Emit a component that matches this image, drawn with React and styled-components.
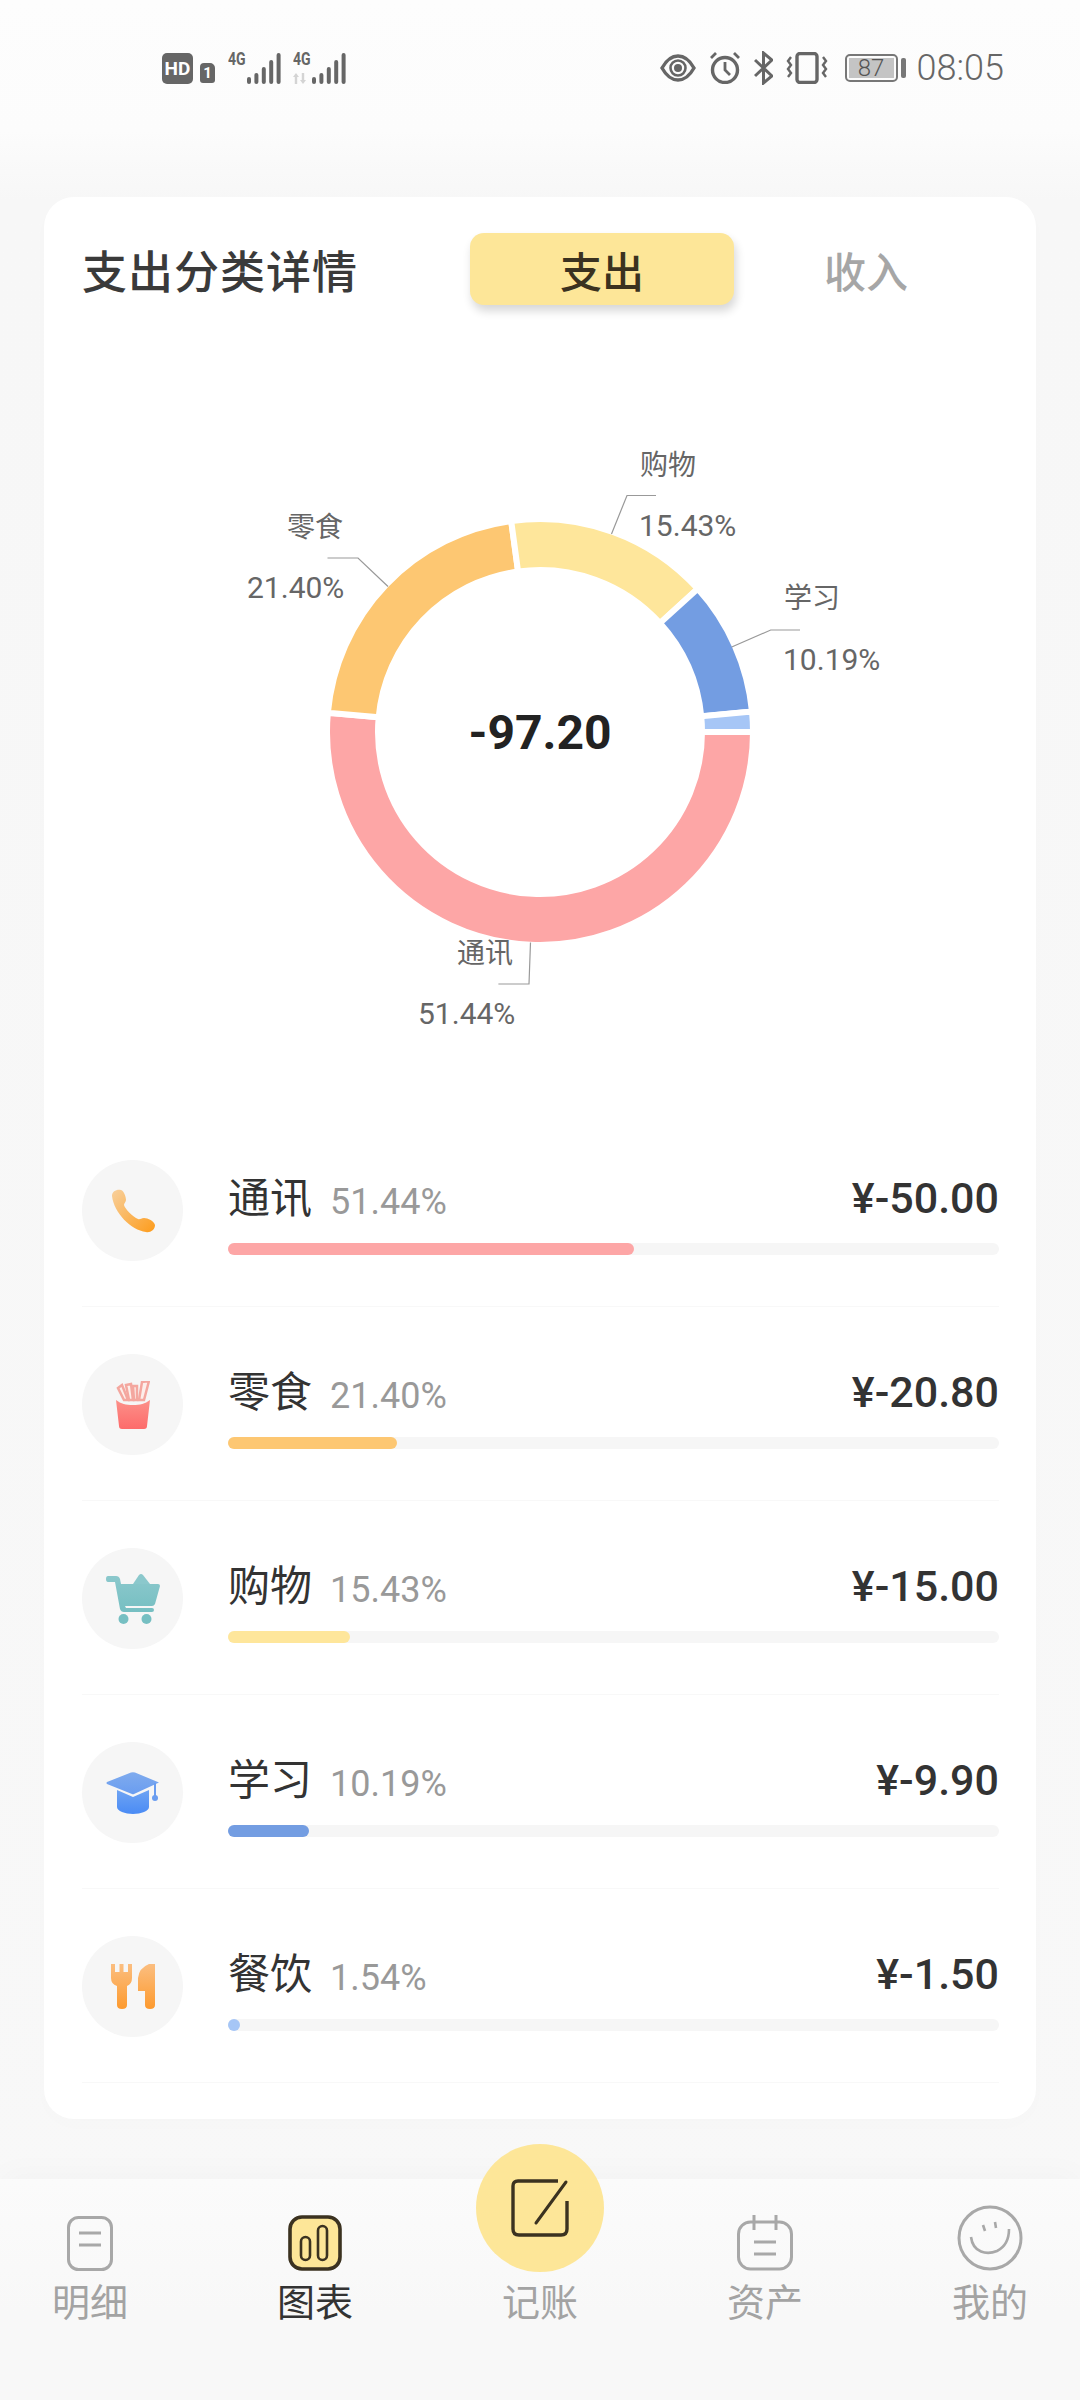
import React from 'react';
import styled, { createGlobalStyle } from 'styled-components';

const GlobalStyle = createGlobalStyle`
	html, body {
		margin: 0;
		padding: 0;
		background: #f8f8f8;
	}
	* {
		box-sizing: border-box;
	}
`;

const CJK = `Roboto, 'Noto Sans CJK SC', sans-serif`;

const Page = styled.div`
	width: 1080px;
	height: 2400px;
	overflow: hidden;
	font-family: ${CJK};
	background: linear-gradient(#fdfdfd 0, #fcfcfc 130px, #f7f7f7 200px, #f8f8f8 100%);
`;

/* status bar */
const StatusBar = styled.div`
	height: 136px;
	padding: 0 76px 0 162px;
	display: flex;
	align-items: center;
	justify-content: space-between;
	color: #666;
`;

const StatusGroup = styled.div`
	display: flex;
	align-items: center;
`;

const HdBadge = styled.span`
	width: 31px;
	height: 31px;
	border-radius: 5px;
	background: #666;
	color: #fff;
	font: 700 19px 'Roboto', sans-serif;
	display: flex;
	align-items: center;
	justify-content: center;
`;

const SimBadge = styled.span`
	width: 15px;
	height: 20px;
	margin: 9px 13px 0 7px;
	border-radius: 4px 5px 3px 3px;
	background: #666;
	color: #fff;
	font: 700 15px 'Roboto', sans-serif;
	display: flex;
	align-items: center;
	justify-content: center;
`;

const Signal = styled.div`
	display: flex;
	height: 32px;
	margin-right: ${(p) => p.$gap || 0}px;
`;

const SignalLabel = styled.div`
	width: 19px;
	display: flex;
	flex-direction: column;
	justify-content: space-between;
	font: 700 18px/14px 'Roboto', sans-serif;
	span {
		display: block;
		transform: scaleX(0.78);
		transform-origin: left top;
		white-space: nowrap;
	}
`;

const StatusIcon = styled.svg`
	display: block;
	margin-right: ${(p) => p.$gap || 0}px;
	flex: none;
`;

const Battery = styled.div`
	width: 53px;
	height: 28px;
	padding: 2px;
	border: 2px solid #777;
	border-radius: 5px;
	margin-right: 3px;
`;

const BatteryFill = styled.div`
	height: 100%;
	background: #c4c4c4;
	color: #555;
	font: 300 24px/20px 'Roboto', sans-serif;
	text-align: center;
`;

const BatteryNub = styled.div`
	width: 5px;
	height: 20px;
	background: #777;
	border-radius: 2px;
	margin-right: 11px;
`;

const Clock = styled.span`
	font: 300 36px 'Roboto', sans-serif;
	color: #666;
`;

/* card */
const Card = styled.div`
	width: 992px;
	margin: 61px 44px 0;
	padding: 36px 0;
	background: #fff;
	border-radius: 30px;
	box-shadow: 0 6px 20px rgba(0, 0, 0, 0.012);
`;

const CardHead = styled.div`
	display: flex;
	align-items: center;
	padding-left: 38px;
`;

const CardTitle = styled.h1`
	width: 388px;
	margin: 0;
	font-size: 45px;
	font-weight: 500;
	color: #3a3a3a;
	letter-spacing: 1px;
`;

const Tab = styled.div`
	width: 264px;
	height: 72px;
	border-radius: 14px;
	display: flex;
	align-items: center;
	justify-content: center;
	font-size: 42px;
	font-weight: 500;
	color: ${(p) => (p.$active ? '#3b3220' : '#a6a6a6')};
	background: ${(p) => (p.$active ? '#fde698' : 'transparent')};
	box-shadow: ${(p) => (p.$active ? '2px 6px 10px rgba(0, 0, 0, 0.16)' : 'none')};
`;

const Chart = styled.svg`
	display: block;
	width: 992px;
	height: 808px;
`;

const ChartLabel = styled.text`
	font-family: ${CJK};
	font-size: ${(p) => p.$size}px;
	fill: #666;
	dominant-baseline: central;
`;

const ChartTotal = styled.text`
	font-family: Roboto, sans-serif;
	font-size: 48px;
	font-weight: 700;
	fill: #222;
	text-anchor: middle;
	dominant-baseline: central;
`;

const List = styled.div`
	padding: 0 37px 0 38px;
`;

const Row = styled.div`
	height: 194px;
	display: flex;
	align-items: center;
	border-bottom: 1px solid #f8f8f8;
`;

const IconCircle = styled.div`
	width: 101px;
	height: 101px;
	border-radius: 50%;
	background: #f6f6f6;
	display: flex;
	align-items: center;
	justify-content: center;
	flex: none;
	margin: 2px 45px 0 0;
`;

const RowBody = styled.div`
	flex: 1;
	padding-top: 2px;
`;

const RowTop = styled.div`
	height: 56px;
	display: flex;
	align-items: center;
	margin-bottom: 20px;
`;

const RowName = styled.span`
	font-size: 42px;
	color: #333;
	margin-right: 18px;
`;

const RowPercent = styled.span`
	font-size: 36px;
	color: #999;
	margin-top: 14px;
`;

const RowAmount = styled.span`
	margin-left: auto;
	margin-top: 6px;
	font-size: 43px;
	font-weight: 500;
	color: #333;
`;

const Track = styled.div`
	height: 12px;
	border-radius: 6px;
	background: #f6f6f6;
`;

const Fill = styled.div`
	height: 100%;
	min-width: 12px;
	border-radius: 6px;
	background: ${(p) => p.$color};
`;

/* bottom nav */
const Nav = styled.div`
	position: relative;
	height: 221px;
	margin-top: 60px;
	padding: 20px 46px 0;
	display: flex;
	justify-content: space-between;
	background: linear-gradient(#fbfbfb, #f8f8f8 60%);
	box-shadow: 0 -6px 30px rgba(0, 0, 0, 0.025);
`;

const NavItem = styled.div`
	width: 88px;
	display: flex;
	flex-direction: column;
	align-items: center;
	font-size: 38px;
	line-height: 50px;
	color: ${(p) => (p.$active ? '#333' : '#a3a3a3')};
`;

const NavIcon = styled.div`
	height: 72px;
	display: flex;
	align-items: flex-end;
	margin-bottom: 7px;
`;

const Fab = styled.div`
	position: absolute;
	left: 476px;
	top: -35px;
	width: 128px;
	height: 128px;
	border-radius: 50%;
	background: #fde698;
	display: flex;
	align-items: center;
	justify-content: center;
`;

const SEGMENTS = [
	{ pct: 51.44, color: '#fda6a6' },
	{ pct: 21.4, color: '#fdc772' },
	{ pct: 15.43, color: '#fee69b' },
	{ pct: 10.19, color: '#739de2' },
	{ pct: 1.54, color: '#a6c6f6' },
];

const CX = 496;
const CY = 427;

function arc(startPct, endPct) {
	const r1 = 213;
	const r0 = 162;
	const a = (startPct / 100) * Math.PI * 2;
	const b = (endPct / 100) * Math.PI * 2;
	const large = endPct - startPct > 50 ? 1 : 0;
	const pt = (r, t) => `${CX + r * Math.cos(t)} ${CY + r * Math.sin(t)}`;
	return `M${pt(r1, a)} A${r1} ${r1} 0 ${large} 1 ${pt(r1, b)} L${pt(r0, b)} A${r0} ${r0} 0 ${large} 0 ${pt(r0, a)}Z`;
}

// card coordinates, the chart starts 44px in and 305px down
const LABELS = [
	{ name: '购物', value: '15.43%', x: 595, y1: 160, y2: 220, line: '567.5,229 583,190.5 612,190.5' },
	{ name: '零食', value: '21.40%', x: 203, y1: 222, y2: 282, nameX: 243, line: '344,281.5 314,253 283.5,253' },
	{ name: '学习', value: '10.19%', x: 739, y1: 293, y2: 354, line: '687.7,342 726.7,325 756,325' },
	{ name: '通讯', value: '51.44%', x: 374, y1: 648, y2: 708, nameX: 413, line: '486.5,637.5 485,679 454.4,679' },
];

const ROWS = [
	{ name: '通讯', pct: 51.44, text: '51.44%', amount: '¥-50.00', color: '#fda6a6', icon: 'phone' },
	{ name: '零食', pct: 21.4, text: '21.40%', amount: '¥-20.80', color: '#fdc772', icon: 'fries' },
	{ name: '购物', pct: 15.43, text: '15.43%', amount: '¥-15.00', color: '#fee69b', icon: 'cart' },
	{ name: '学习', pct: 10.19, text: '10.19%', amount: '¥-9.90', color: '#739de2', icon: 'hat' },
	{ name: '餐饮', pct: 1.54, text: '1.54%', amount: '¥-1.50', color: '#a6c6f6', icon: 'food' },
];

function Grad({ id, from, to, diagonal }) {
	return (
		<defs>
			<linearGradient id={id} x1="0" y1="0" x2={diagonal ? '1' : '0'} y2="1">
				<stop offset="0" stopColor={from} />
				<stop offset="1" stopColor={to} />
			</linearGradient>
		</defs>
	);
}

function CategoryIcon({ type }) {
	if (type === 'phone') {
		return (
			<svg width="44" height="44" viewBox="0 0 44 44">
				<Grad id="gPhone" from="#f8d09c" to="#fd9c1c" diagonal />
				<path
					fill="url(#gPhone)"
					d="M1 7C1 2 6 0 10 1C13 2 15 8 15 11C15 13 13 14 13 16C14 20 22 28 27 30C29 31 30 29 33 29C37 29 43 32 44 36C44 41 39 44 35 43C20 41 3 24 1 7Z"
				/>
			</svg>
		);
	}
	if (type === 'fries') {
		return (
			<svg width="34" height="48" viewBox="0 0 34 48">
				<Grad id="gFries" from="#fc9089" to="#fd6b6b" />
				<g stroke="#f4a79f" strokeWidth="2.5" fill="#fdeeea">
					<path d="M2 7L6 4L12 19H8Z" />
					<path d="M10 4L15 3L17 19H13Z" />
					<path d="M17 5L21 5L21 19H18Z" />
					<path d="M26 1L33 0L28 19H23Z" />
				</g>
				<path fill="url(#gFries)" d="M0 19C5 23 10 24 17 24C24 24 29 23 34 19L31 45Q31 48 28 48H6Q3 48 3 45Z" />
			</svg>
		);
	}
	if (type === 'cart') {
		return (
			<svg width="54" height="50" viewBox="0 0 54 50">
				<Grad id="gCart" from="#8bc8cc" to="#76bfc2" />
				<path fill="#8bc8cc" d="M27 10L33 1Q35 -1 37 1L44 10Z" />
				<path
					fill="url(#gCart)"
					d="M2 2H10Q13 2 14 5L15 10H52Q54 10 54 12L49 30Q48 32 46 32H19L20 34H46Q48 34 48 36Q48 38 46 38H18Q15 38 14 35L9 8H2Q0 8 0 5Q0 2 2 2Z"
				/>
				<circle cx="17.5" cy="45" r="5" fill="#76bfc2" />
				<circle cx="40.5" cy="45" r="5" fill="#76bfc2" />
			</svg>
		);
	}
	if (type === 'hat') {
		return (
			<svg width="53" height="42" viewBox="0 0 53 42">
				<Grad id="gHat" from="#7fabee" to="#6a9df0" />
				<Grad id="gHatBase" from="#6fa4f3" to="#4a8bf5" />
				<path fill="url(#gHatBase)" d="M11 18L27 25L43 18V35C43 39 35 42 27 42C19 42 11 39 11 35Z" />
				<path fill="url(#gHat)" d="M1 10L25 0.5Q27 0 29 0.5L53 10.5L28 22Q27 22.5 26 22L1 12Q0 11 1 10Z" />
				<path stroke="#6a9df0" strokeWidth="2" d="M49 11V24" />
				<circle cx="49" cy="26" r="3" fill="#6a9df0" />
			</svg>
		);
	}
	return (
		<svg width="44" height="45" viewBox="0 0 44 45">
			<Grad id="gFood" from="#fbbe80" to="#fd9a2e" />
			<path
				fill="url(#gFood)"
				d="M0 0H4V8H8.5V0H12.5V8H17V0H21V14Q21 20 16 22V41Q16 45 11 45Q6 45 6 41V22Q0 20 0 14Z"
			/>
			<path fill="url(#gFood)" d="M44 0V41Q44 45 39 45Q34 45 34 41V27H27V14Q28 4 38 0Z" />
		</svg>
	);
}

function Bars() {
	const heights = [7, 11, 17, 24, 31];
	return (
		<svg width="34" height="32" viewBox="0 0 34 32">
			{heights.map((h, i) => (
				<rect key={i} x={i * 7.4} y={32 - h} width="4" height={h} rx="2" fill="#666" />
			))}
		</svg>
	);
}

export default function App() {
	let acc = 0;

	return (
		<Page>
			<GlobalStyle />
			<StatusBar>
				<StatusGroup>
					<HdBadge>HD</HdBadge>
					<SimBadge>1</SimBadge>
					<Signal $gap={12}>
						<SignalLabel>
							<span>4G</span>
						</SignalLabel>
						<Bars />
					</Signal>
					<Signal>
						<SignalLabel>
							<span>4G</span>
							<svg width="15" height="11" viewBox="0 0 15 11">
								<path fill="#d4d4d4" d="M3 0L6 4H4.2V11H1.8V4H0ZM8.8 0H11.2V7H13L10 11L7 7H8.8Z" />
							</svg>
						</SignalLabel>
						<Bars />
					</Signal>
				</StatusGroup>
				<StatusGroup>
					<StatusIcon width="36" height="28" viewBox="0 0 36 28" $gap={13}>
						<path fill="none" stroke="#666" strokeWidth="3.4" d="M2 14C7 5 12 2 18 2C24 2 29 5 34 14C29 23 24 26 18 26C12 26 7 23 2 14Z" />
						<circle cx="18" cy="14" r="7.5" fill="none" stroke="#666" strokeWidth="2.6" />
						<circle cx="18" cy="14" r="4" fill="#666" />
					</StatusIcon>
					<StatusIcon width="32" height="32" viewBox="0 0 32 32" $gap={13}>
						<circle cx="16" cy="18" r="12.5" fill="none" stroke="#666" strokeWidth="3.4" />
						<path fill="none" stroke="#666" strokeWidth="2.8" d="M16 10V18L21 23M2 6L7 1M30 6L25 1" />
					</StatusIcon>
					<StatusIcon width="19" height="34" viewBox="0 0 19 34" $gap={13}>
						<path fill="none" stroke="#666" strokeWidth="3" d="M1 9L18 25L9.5 32V2L18 9L1 25" />
					</StatusIcon>
					<StatusIcon width="42" height="32" viewBox="0 0 42 32" $gap={17}>
						<rect x="11" y="1.5" width="20" height="29" rx="3" fill="none" stroke="#666" strokeWidth="3.4" />
						<path fill="none" stroke="#666" strokeWidth="2.4" d="M5 5L2 9L5 13L2 17L5 21L2 25M37 5L40 9L37 13L40 17L37 21L40 25" />
					</StatusIcon>
					<Battery>
						<BatteryFill>87</BatteryFill>
					</Battery>
					<BatteryNub />
					<Clock>08:05</Clock>
				</StatusGroup>
			</StatusBar>

			<Card>
				<CardHead>
					<CardTitle>支出分类详情</CardTitle>
					<Tab $active>支出</Tab>
					<Tab>收入</Tab>
				</CardHead>

				<Chart viewBox="0 0 992 808">
					{SEGMENTS.map((s) => {
						const d = arc(acc, acc + s.pct);
						acc += s.pct;
						return <path key={s.color} d={d} fill={s.color} stroke="#fff" strokeWidth="6" />;
					})}
					{LABELS.map((l) => (
						<g key={l.name}>
							<polyline points={l.line} fill="none" stroke="#999" strokeWidth="1.2" />
							<ChartLabel $size={28} x={l.nameX || l.x + 1} y={l.y1}>
								{l.name}
							</ChartLabel>
							<ChartLabel $size={30} x={l.x} y={l.y2}>
								{l.value}
							</ChartLabel>
						</g>
					))}
					<ChartTotal x={CX} y={CY}>
						-97.20
					</ChartTotal>
				</Chart>

				<List>
					{ROWS.map((r) => (
						<Row key={r.name}>
							<IconCircle>
								<CategoryIcon type={r.icon} />
							</IconCircle>
							<RowBody>
								<RowTop>
									<RowName>{r.name}</RowName>
									<RowPercent>{r.text}</RowPercent>
									<RowAmount>{r.amount}</RowAmount>
								</RowTop>
								<Track>
									<Fill $color={r.color} style={{ width: `${(r.pct * 790) / 771}%` }} />
								</Track>
							</RowBody>
						</Row>
					))}
				</List>
			</Card>

			<Nav>
				<NavItem>
					<NavIcon>
						<svg width="46" height="55" viewBox="0 0 46 55">
							<rect x="1.5" y="1.5" width="43" height="52" rx="10" fill="none" stroke="#a8a8a8" strokeWidth="3" />
							<path stroke="#a8a8a8" strokeWidth="3" d="M12 17H34M12 29H34" />
						</svg>
					</NavIcon>
					明细
				</NavItem>
				<NavItem $active>
					<NavIcon>
						<svg width="54" height="56" viewBox="0 0 54 56">
							<rect x="2" y="2" width="50" height="52" rx="12" fill="#fde698" stroke="#3b3220" strokeWidth="3.6" />
							<rect x="13" y="22" width="9" height="23" rx="4.5" fill="none" stroke="#3b3220" strokeWidth="2.6" />
							<rect x="30" y="11" width="9" height="34" rx="4.5" fill="none" stroke="#3b3220" strokeWidth="2.6" />
						</svg>
					</NavIcon>
					图表
				</NavItem>
				<NavItem>
					<NavIcon />
					记账
				</NavItem>
				<NavItem>
					<NavIcon>
						<svg width="56" height="56" viewBox="0 0 56 56">
							<rect x="1.5" y="7" width="53" height="47" rx="12" fill="none" stroke="#a8a8a8" strokeWidth="3" />
							<path stroke="#a8a8a8" strokeWidth="3" d="M17 0V15M39 0V15M17 27H39M17 39H39" />
						</svg>
					</NavIcon>
					资产
				</NavItem>
				<NavItem>
					<NavIcon>
						<svg width="66" height="66" viewBox="0 0 66 66">
							<circle cx="33" cy="33" r="31" fill="none" stroke="#a8a8a8" strokeWidth="3" />
							<path fill="none" stroke="#a8a8a8" strokeWidth="2.6" d="M14 32C16 48 30 50 40 46C48 42 52 34 52 24M26 20L28 26M38 17L39 23" />
						</svg>
					</NavIcon>
					我的
				</NavItem>
				<Fab>
					<svg width="58" height="58" viewBox="0 0 58 58">
						<path fill="none" stroke="#3b3220" strokeWidth="3.4" d="M47 2H7Q2 2 2 7V50Q2 56 8 56H50Q56 56 56 50V22" />
						<path stroke="#3b3220" strokeWidth="3" strokeLinecap="round" d="M55 3L25 44" />
					</svg>
				</Fab>
			</Nav>
		</Page>
	);
}
